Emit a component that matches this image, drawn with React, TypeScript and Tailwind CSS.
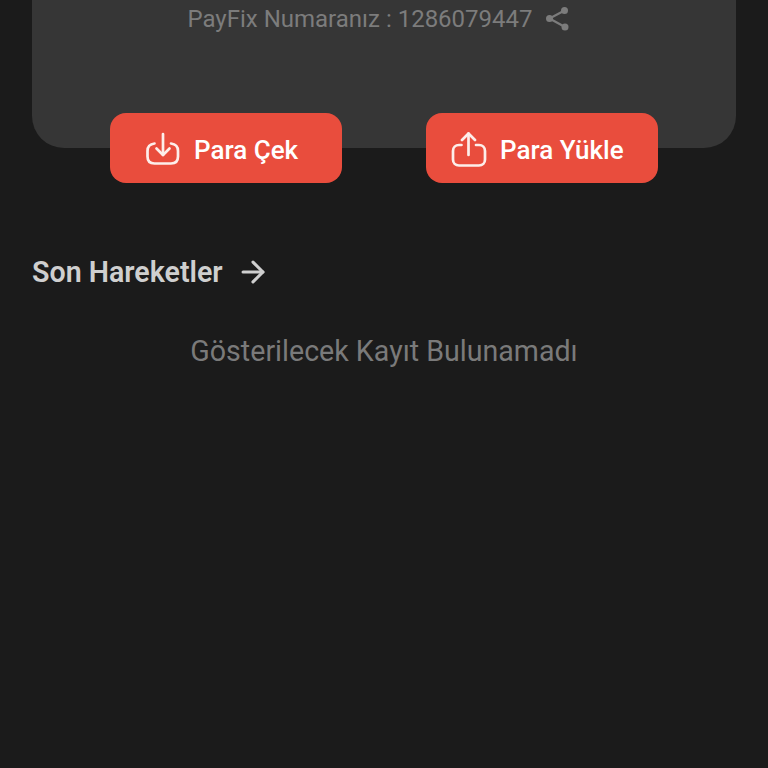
import { ArrowRight } from "lucide-react";

function DownloadIcon() {
  return (
    <svg width="36" height="36" viewBox="0 0 36 36" fill="none" stroke="#fdeeea" strokeWidth="2.700" strokeLinecap="round" strokeLinejoin="round">
      <path d="M18 2V23" />
      <path d="M11.500 16.500l6.500 6.500 6.500-6.500" />
      <path d="M9.500 11.500C5 12 2.500 15 2.500 19v5.500c0 4.500 2.500 7 7 7h16.500c4.500 0 7-2.500 7-7V19c0-4-2.500-7-7-7.500" />
    </svg>
  );
}

function UploadIcon() {
  return (
    <svg width="36" height="36" viewBox="0 0 36 36" fill="none" stroke="#fdeeea" strokeWidth="2.700" strokeLinecap="round" strokeLinejoin="round">
      <path d="M17.500 23V1.500" />
      <path d="M11 8l6.500-6.500L24 8" />
      <path d="M10.500 13H8c-3.500 0-6 2.500-6 6v8.500c0 3.500 2.500 6 6 6h20c3.500 0 6-2.500 6-6V19c0-3.500-2.500-6-6-6h-3" />
    </svg>
  );
}

function ShareIcon() {
  return (
    <svg width="24" height="24" viewBox="0 0 24 24" fill="#7c7c7c" stroke="#7c7c7c" strokeWidth="2.200">
      <path d="M18.500 3.500L3.500 11.500 19 20" fill="none" />
      <circle cx="18.500" cy="3.500" r="3.500" stroke="none" />
      <circle cx="3.500" cy="11.500" r="3.500" stroke="none" />
      <circle cx="19" cy="20" r="3.500" stroke="none" />
    </svg>
  );
}

export default function App() {
  return (
    <div className="h-[768px] w-[768px] overflow-hidden bg-[#1b1b1b] font-['Roboto',sans-serif]">
      <div className="mx-8 flex h-[148px] w-[704px] items-start justify-center rounded-b-[32px] bg-[#363636] pr-[11px]">
        <div className="mt-[5px] flex items-center gap-[13px] text-[24px] leading-[28px] text-[#7c7c7c]">
          <span>PayFix Numaranız : 1286079447</span>
          <ShareIcon />
        </div>
      </div>

      <div className="-mt-[35px] ml-[110px] flex gap-[84px]">
        <button className="flex h-[70px] w-[232px] items-center gap-[13px] rounded-2xl bg-[#e94d3d] pt-[3px] pl-[35px] text-[26px] font-medium text-white">
          <DownloadIcon />
          <span className="pt-[1px]">Para Çek</span>
        </button>
        <button className="flex h-[70px] w-[232px] items-center gap-[13px] rounded-2xl bg-[#e94d3d] pt-[3px] pl-[25px] text-[26px] font-medium text-white">
          <UploadIcon />
          <span className="pt-[1px]">Para Yükle</span>
        </button>
      </div>

      <div className="mt-[70px] ml-8 flex items-center gap-[13px] text-[#cfcfcf]">
        <span className="text-[28.600px] leading-[38px] font-semibold">Son Hareketler</span>
        <ArrowRight size={34} strokeWidth={2.2} />
      </div>

      <p className="mt-[42px] text-center text-[28.600px] leading-[36px] text-[#7a7a7a]">Gösterilecek Kayıt Bulunamadı</p>
    </div>
  );
}
